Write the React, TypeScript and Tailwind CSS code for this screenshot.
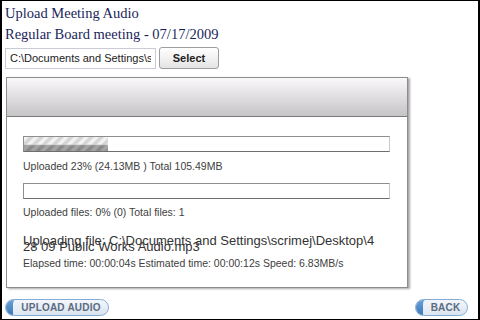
import React from "react";

const serif = "font-['Liberation_Serif',serif]";
const ui = "font-['Liberation_Sans',sans-serif]";

function StripedFill({ percent }: { percent: number }) {
  return (
    <div className="h-full overflow-hidden" style={{ width: `${percent}%` }}>
      <svg width="100%" height="100%" preserveAspectRatio="none">
        <defs>
          <pattern id="stripes" width="10" height="16" patternUnits="userSpaceOnUse" patternTransform="skewX(-45)">
            <rect x="0" y="0" width="10" height="8" fill="#d6d6d6" />
            <rect x="0" y="0" width="5" height="8" fill="#f2f2f2" />
            <rect x="0" y="8" width="10" height="8" fill="#8a8a8a" />
            <rect x="0" y="8" width="5" height="8" fill="#a4a4a4" />
          </pattern>
        </defs>
        <rect width="100%" height="100%" fill="url(#stripes)" />
      </svg>
    </div>
  );
}

function ProgressBar({ percent }: { percent: number }) {
  return (
    <div className="h-[16px] w-[367px] border border-[#8e8e8e] border-b-[#6e6e6e] border-r-[#c8c8c8] bg-white">
      {percent > 0 && <StripedFill percent={percent} />}
    </div>
  );
}

function PillButton({ label, width }: { label: string; width: string }) {
  return (
    <button
      className={`relative h-[17px] ${width} rounded-full border border-[#82acd6] bg-gradient-to-b from-[#f4f7fb] to-[#d9e3ee] overflow-hidden ${ui} text-[10px] font-bold text-[#5b6b82] tracking-[0.2px] leading-none`}
    >
      <span className="absolute left-[-5px] top-[-3px] h-[23px] w-[19px] rounded-full bg-gradient-to-b from-[#74a8dc] to-[#2c6aae]" />
      <span className="absolute left-[7px] top-[-2px] h-[21px] w-[12px] rounded-full bg-gradient-to-b from-[#f4f7fb] to-[#d9e3ee]" />
      <span className="relative pl-[8px]">{label}</span>
    </button>
  );
}

export default function App() {
  return (
    <div className="w-[480px] h-[320px] bg-white border-l-2 border-r-2 border-t border-b border-black flex flex-col overflow-hidden">
      <div className={`${serif} text-[14.5px] leading-[20px] text-[#1a1f5c] pl-[3px] pt-[2px]`}>
        <div>Upload Meeting Audio</div>
        <div className="mt-[1px]">Regular Board meeting - 07/17/2009</div>
      </div>

      <div className="flex items-center gap-[3px] pl-[3px] mt-[3px]">
        <input
          readOnly
          value="C:\Documents and Settings\scrimej\Desktop\428 09 Public Works Audio.mp3"
          className={`h-[21px] w-[151px] border border-[#c9ccd6] bg-white px-[4px] outline-none ${ui} text-[11px] text-[#222]`}
        />
        <button className={`h-[22px] w-[60px] rounded-[3px] border border-[#9d9d9d] bg-gradient-to-b from-white to-[#e4e4e4] ${ui} text-[11px] font-bold text-[#222]`}>
          Select
        </button>
      </div>

      <div className="ml-[4px] mt-[8px] w-[402px] h-[211px] border border-[#8c8c8c] bg-white shadow-[2px_1px_2px_rgba(0,0,0,0.35)] flex flex-col">
        <div className="h-[39px] border-b border-[#7a7a7a] bg-gradient-to-b from-[#faf8fa] to-[#c6c4c6]" />
        <div className={`pl-[16px] pt-[19px] ${ui} text-[#404040]`}>
          <ProgressBar percent={23} />
          <div className="text-[10.5px] leading-[12px] mt-[8px]">Uploaded 23% (24.13MB ) Total 105.49MB</div>

          <div className="mt-[11px]">
            <ProgressBar percent={0} />
          </div>
          <div className="text-[10.5px] leading-[12px] mt-[7px]">Uploaded files: 0% (0) Total files: 1</div>

          <div className="mt-[20px] text-[13px] leading-[6px] text-[#333] whitespace-nowrap">
            <div>Uploading file: C:\Documents and Settings\scrimej\Desktop\4</div>
            <div className="mt-[0px]">28 09 Public Works Audio.mp3</div>
          </div>
          <div className="text-[10.5px] leading-[12px] mt-[7px]">
            Elapsed time: 00:00:04s Estimated time: 00:00:12s Speed: 6.83MB/s
          </div>
        </div>
      </div>

      <div className="flex justify-between items-center pl-[3px] pr-[10px] mt-[11px]">
        <PillButton label="UPLOAD AUDIO" width="w-[104px]" />
        <PillButton label="BACK" width="w-[53px]" />
      </div>
    </div>
  );
}
